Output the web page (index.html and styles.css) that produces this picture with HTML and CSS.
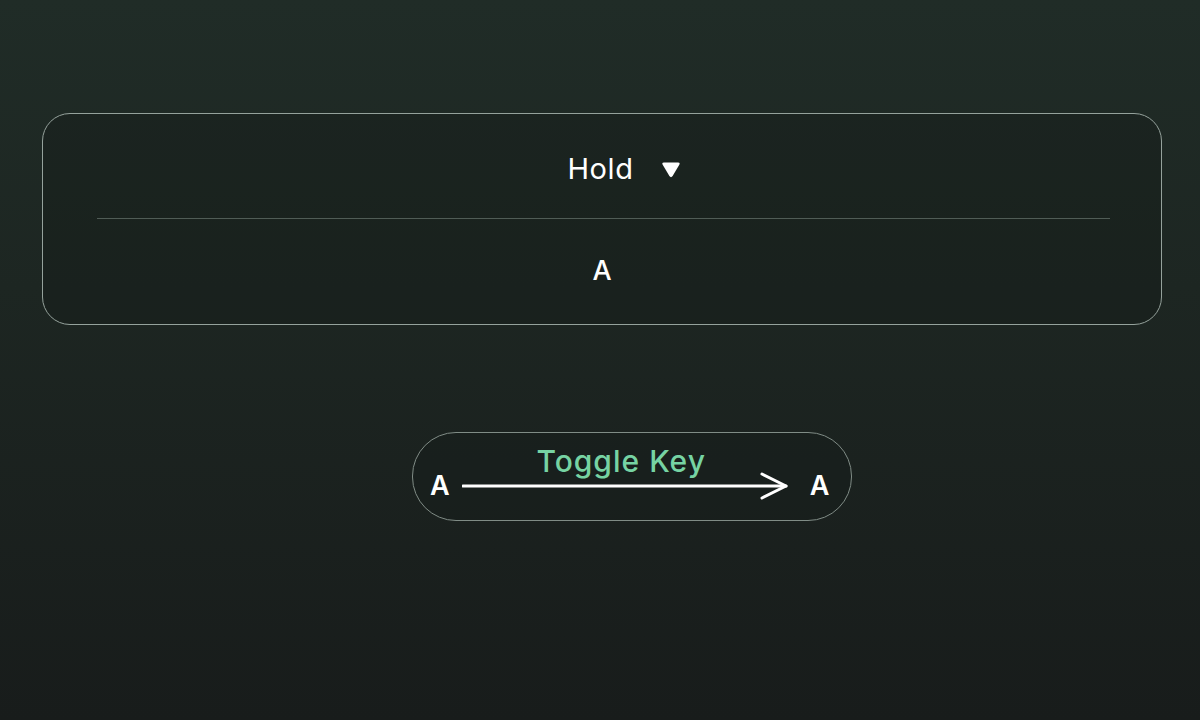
FILE: index.html
```html
<!DOCTYPE html>
<html lang="en">
<head>
<meta charset="utf-8">
<title>Toggle Key</title>
<link rel="stylesheet" href="styles.css">
</head>
<body>
<main class="page">
  <section class="card">
    <div class="card-row card-head">
      <span class="mode">Hold</span>
      <svg class="caret" width="20" height="17" viewBox="0 0 20 17" aria-hidden="true">
        <path d="M3 1.5 H17 Q19.5 1.5 18.3 3.8 L11.6 15 Q10 17.3 8.4 15 L1.7 3.8 Q0.5 1.5 3 1.5 Z" fill="#ffffff"/>
      </svg>
    </div>
    <div class="divider"></div>
    <div class="card-row card-body">
      <span class="key">A</span>
    </div>
  </section>

  <section class="pill">
    <span class="pill-label">Toggle Key</span>
    <span class="pill-key left">A</span>
    <svg class="arrow" width="327" height="28" viewBox="0 0 327 28" aria-hidden="true">
      <path d="M1 14 H324" stroke="#ffffff" stroke-width="3" stroke-linecap="round" fill="none"/>
      <path d="M300 2 L324 14 L300 26" stroke="#ffffff" stroke-width="3" stroke-linecap="round" stroke-linejoin="round" fill="none"/>
    </svg>
    <span class="pill-key right">A</span>
  </section>
</main>
</body>
</html>
```

FILE: styles.css
```css
html, body {
  margin: 0;
  padding: 0;
}

body {
  width: 1200px;
  height: 720px;
  overflow: hidden;
  background: linear-gradient(180deg, #202c27 0%, #1d2622 40%, #181c1b 100%);
  font-family: Inter, "Liberation Sans", sans-serif;
  color: #ffffff;
}

.page {
  padding-top: 113px;
  display: flex;
  flex-direction: column;
}

.card {
  margin-left: 42px;
  width: 1120px;
  height: 212px;
  box-sizing: border-box;
  border: 1.5px solid #95a29c;
  border-radius: 28px;
  background: rgba(20, 26, 24, 0.35);
  display: flex;
  flex-direction: column;
}

.card-row {
  display: flex;
  align-items: center;
  justify-content: center;
}

.card-head {
  height: 104px;
  gap: 27px;
  padding-left: 44px;
  padding-top: 6px;
  box-sizing: border-box;
}

.mode {
  font-size: 29px;
  font-weight: 400;
  letter-spacing: 0.6px;
}

.caret {
  display: block;
  margin-top: 2px;
}

.divider {
  margin: 0 51px 0 54px;
  height: 1px;
  background: #505c56;
}

.card-body {
  height: 104px;
  padding-bottom: 2px;
}

.key {
  font-size: 27px;
  font-weight: 500;
}

.pill {
  margin-top: 107px;
  margin-left: 412px;
  width: 440px;
  height: 89px;
  box-sizing: border-box;
  border: 1.5px solid #808c86;
  border-radius: 44px;
  background: rgba(22, 28, 26, 0.45);
  display: grid;
  grid-template-columns: auto auto auto;
  grid-template-rows: 22px 28px;
  justify-content: start;
  align-content: start;
  align-items: center;
  padding: 17px 0 0 17px;
  column-gap: 12px;
}

.pill-label {
  grid-column: 2;
  grid-row: 1;
  justify-self: center;
  color: #76d3a3;
  font-size: 30px;
  font-weight: 500;
  letter-spacing: 1px;
  line-height: 22px;
  margin-left: -8px;
}

.pill-key {
  grid-row: 2;
  font-size: 27px;
  font-weight: 600;
  line-height: 28px;
}

.pill-key.left {
  grid-column: 1;
}

.pill-key.right {
  grid-column: 3;
  margin-left: 9px;
}

.arrow {
  grid-column: 2;
  grid-row: 2;
  display: block;
}
```
